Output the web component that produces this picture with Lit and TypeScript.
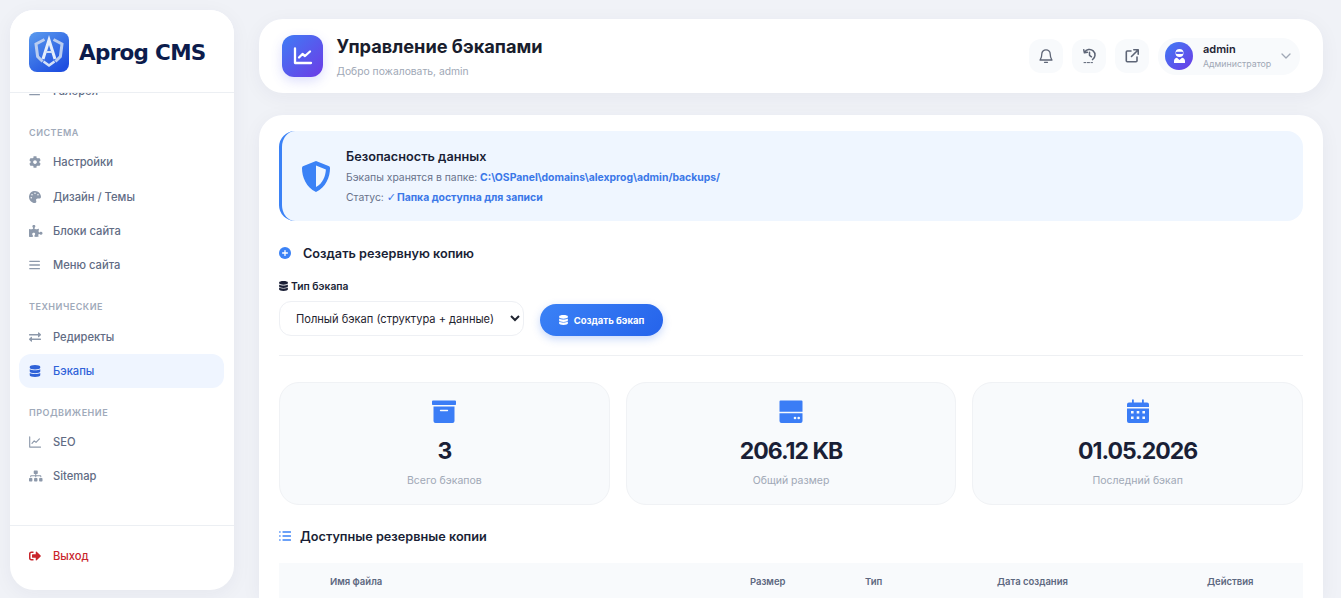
import { LitElement, html, css, svg } from "lit";
import { customElement } from "lit/decorators.js";

const DB = "M448 73.143v45.714C448 159.143 347.667 192 224 192S0 159.143 0 118.857V73.143C0 32.857 100.333 0 224 0s224 32.857 224 73.143zM448 176v102.857C448 319.143 347.667 352 224 352S0 319.143 0 278.857V176c48.125 33.143 136.208 48.572 224 48.572S399.874 209.143 448 176zm0 160v102.857C448 479.143 347.667 512 224 512S0 479.143 0 438.857V336c48.125 33.143 136.208 48.572 224 48.572S399.874 369.143 448 336z";
const dbIcon = html`<svg viewBox="0 0 448 512"><path fill="currentColor" d=${DB}></path></svg>`;

const icons: Record<string, unknown> = {
  cog: html`<svg viewBox="0 0 512 512"><path fill="currentColor" d="M487.4 315.7l-42.6-24.6c4.3-23.2 4.3-47 0-70.2l42.6-24.6c4.9-2.8 7.1-8.6 5.5-14-11.1-35.6-30-67.8-54.7-94.6-3.8-4.1-10-5.1-14.8-2.3L380.8 110c-17.9-15.4-38.5-27.3-60.8-35.1V25.8c0-5.6-3.9-10.5-9.4-11.7-36.7-8.2-74.3-7.8-109.2 0-5.5 1.2-9.4 6.1-9.4 11.7V75c-22.2 7.9-42.8 19.8-60.8 35.1L88.7 85.5c-4.9-2.8-11-1.9-14.8 2.3-24.7 26.7-43.6 58.9-54.7 94.6-1.7 5.4.6 11.2 5.5 14L67.3 221c-4.3 23.2-4.3 47 0 70.2l-42.6 24.6c-4.9 2.8-7.1 8.6-5.5 14 11.1 35.6 30 67.8 54.7 94.6 3.8 4.1 10 5.1 14.8 2.3l42.6-24.6c17.9 15.4 38.5 27.3 60.8 35.1v49.2c0 5.6 3.9 10.5 9.4 11.7 36.7 8.2 74.3 7.8 109.2 0 5.5-1.2 9.4-6.1 9.4-11.7v-49.2c22.2-7.9 42.8-19.8 60.8-35.1l42.6 24.6c4.9 2.8 11 1.9 14.8-2.3 24.7-26.7 43.6-58.9 54.7-94.6 1.5-5.5-.7-11.3-5.6-14.1zM256 336c-44.1 0-80-35.9-80-80s35.9-80 80-80 80 35.9 80 80-35.9 80-80 80z"></path></svg>`,
  palette: html`<svg viewBox="0 0 512 512"><path fill="currentColor" d="M204.3 5C104.9 24.4 24.8 104.3 5.2 203.4c-37 187 131.7 326.4 258.8 306.7 41.2-6.4 61.4-54.6 42.5-91.7-23.1-45.4 9.9-98.4 60.9-98.4h79.7c35.8 0 64.8-29.6 64.9-65.3C511.5 97.1 368.1-26.9 204.3 5zM96 320c-17.7 0-32-14.3-32-32s14.3-32 32-32 32 14.3 32 32-14.3 32-32 32zm32-128c-17.7 0-32-14.3-32-32s14.3-32 32-32 32 14.3 32 32-14.3 32-32 32zm128-64c-17.7 0-32-14.3-32-32s14.3-32 32-32 32 14.3 32 32-14.3 32-32 32zm128 64c-17.7 0-32-14.3-32-32s14.3-32 32-32 32 14.3 32 32-14.3 32-32 32z"></path></svg>`,
  puzzle: html`<svg viewBox="0 0 576 512"><path fill="currentColor" d="M519.442 288.651c-41.519 0-59.5 31.593-82.058 31.593C377.409 320.244 432 144 432 144s-196.288 80-196.288-3.297c0-35.827 36.288-46.25 36.288-85.985C272 19.216 243.885 0 210.539 0c-34.654 0-66.366 18.891-66.366 56.346 0 41.364 31.711 59.277 31.711 81.75C175.885 207.719 0 166.758 0 166.758v333.237s178.635 41.047 178.635-28.662c0-22.473-40-40.107-40-81.471 0-37.456 29.25-56.346 63.577-56.346 33.673 0 61.788 19.216 61.788 54.717 0 39.735-36.288 50.158-36.288 85.985 0 60.803 129.675 25.73 181.23 25.73 0 0-34.725-120.101 25.827-120.101 35.962 0 46.423 36.152 86.308 36.152C556.712 416 576 387.99 576 354.443c0-34.199-18.962-65.792-56.558-65.792z"></path></svg>`,
  bars: html`<svg viewBox="0 0 12 12"><path fill="none" stroke="currentColor" stroke-width="1.300" stroke-linecap="round" d="M.8 2.300h9.600M.8 6h9.600M.8 9.700h9.600"></path></svg>`,
  exchange: html`<svg viewBox="0 0 512 512"><path fill="currentColor" d="M0 168v-16c0-13.255 10.745-24 24-24h360V80c0-21.367 25.899-32.042 40.971-16.971l80 80c9.372 9.373 9.372 24.569 0 33.941l-80 80C409.956 271.982 384 261.456 384 240v-48H24c-13.255 0-24-10.745-24-24zm488 152H128v-48c0-21.314-25.862-32.080-40.971-16.971l-80 80c-9.372 9.373-9.372 24.569 0 33.941l80 80C102.057 463.997 128 453.437 128 432v-48h360c13.255 0 24-10.745 24-24v-16c0-13.255-10.745-24-24-24z"></path></svg>`,
  db: dbIcon,
  chart: html`<svg viewBox="0 0 12 12"><path fill="none" stroke="currentColor" stroke-width="1.150" stroke-linecap="round" stroke-linejoin="round" d="M.7 .9v10.200h10.800M3 7.300l2.200-2.400 1.800 1.500 3.400-3.500"></path></svg>`,
  sitemap: html`<svg viewBox="0 0 640 512"><path fill="currentColor" d="M128 352H32c-17.670 0-32 14.330-32 32v96c0 17.670 14.330 32 32 32h96c17.670 0 32-14.330 32-32v-96c0-17.670-14.330-32-32-32zm-24-80h192v48h48v-48h192v48h48v-57.590c0-21.170-17.230-38.410-38.410-38.410H344v-64h40c17.670 0 32-14.330 32-32V32c0-17.670-14.330-32-32-32H256c-17.670 0-32 14.330-32 32v96c0 17.670 14.330 32 32 32h40v64H94.410C73.230 224 56 241.230 56 262.410V320h48v-48zm264 80h-96c-17.670 0-32 14.330-32 32v96c0 17.670 14.330 32 32 32h96c17.670 0 32-14.330 32-32v-96c0-17.670-14.330-32-32-32zm240 0h-96c-17.670 0-32 14.330-32 32v96c0 17.670 14.330 32 32 32h96c17.670 0 32-14.330 32-32v-96c0-17.670-14.330-32-32-32z"></path></svg>`,
  logout: html`<svg viewBox="0 0 512 512"><path fill="currentColor" d="M497 273L329 441c-15 15-41 4.500-41-17v-96H152c-13.300 0-24-10.700-24-24v-96c0-13.300 10.700-24 24-24h136V88c0-21.400 25.900-32 41-17l168 168c9.300 9.400 9.300 24.600 0 34zM192 436v-40c0-6.600-5.400-12-12-12H96c-17.700 0-32-14.300-32-32V160c0-17.700 14.300-32 32-32h84c6.600 0 12-5.400 12-12V76c0-6.600-5.400-12-12-12H96c-53 0-96 43-96 96v192c0 53 43 96 96 96h84c6.600 0 12-5.400 12-12z"></path></svg>`,
};

const logoMark = svg`<svg viewBox="0 0 40 40">
  <defs><linearGradient id="lg" x1="0" y1="0" x2=".7" y2="1"><stop offset="0" stop-color="#5a9bee"></stop><stop offset="1" stop-color="#1f4fe0"></stop></linearGradient></defs>
  <rect width="40" height="40" rx="8" fill="url(#lg)"></rect>
  <path fill="none" stroke="#b9cdf0" stroke-width="3" stroke-linejoin="miter" d="M15.500 7.500L7 12l1.600 12.500 5 5M24.500 7.500L33 12l-1.600 12.500-5 5"></path>
  <path fill="none" stroke="#e6eefb" stroke-width="3" stroke-linejoin="miter" d="M14 27L20 8l6 19"></path>
  <path fill="none" stroke="#cfdef6" stroke-width="2" d="M16.500 20h7"></path>
  <path fill="none" stroke="#d5e2f8" stroke-width="2.600" d="M14.500 29.500L20 33.500l5.500-4"></path>
</svg>`;

type Item = { label: string; icon: string; active?: boolean };
const groups: { title: string; items: Item[] }[] = [
  { title: "Система", items: [
    { label: "Настройки", icon: "cog" },
    { label: "Дизайн / Темы", icon: "palette" },
    { label: "Блоки сайта", icon: "puzzle" },
    { label: "Меню сайта", icon: "bars" },
  ] },
  { title: "Технические", items: [
    { label: "Редиректы", icon: "exchange" },
    { label: "Бэкапы", icon: "db", active: true },
  ] },
  { title: "Продвижение", items: [
    { label: "SEO", icon: "chart" },
    { label: "Sitemap", icon: "sitemap" },
  ] },
];

@customElement("app-root")
export class AppRoot extends LitElement {
  static styles = css`
    :host { display: flex; height: 598px; overflow: hidden; background: #f0f2f7; font-family: Inter, "Noto Sans", sans-serif; color: #1a1f36; box-sizing: border-box; -webkit-font-smoothing: antialiased; }
    * { box-sizing: border-box; }
    svg { display: block; }
    .side { flex: none; width: 224px; height: 580px; margin: 10px 0 0 10px; background: #fff; border-radius: 24px; display: flex; flex-direction: column; overflow: hidden; box-shadow: 0 4px 20px rgba(30, 40, 80, .05); }
    .brand { flex: none; height: 83px; border-bottom: 1px solid #eceff3; padding: 2px 0 0 19px; display: flex; align-items: center; gap: 10px; background: #fff; }
    .mark { width: 40px; height: 40px; }
    .brand-name { font-family: "DejaVu Sans", sans-serif; font-weight: 700; font-size: 21.500px; color: #0c1c4c; white-space: nowrap; letter-spacing: -.7px; }
    .nav { flex: 1; overflow: hidden; padding: 0 10px 0 9px; }
    .clip { margin-top: -19px; }
    .item { height: 33.400px; margin-bottom: 1px; padding-left: 10px; display: flex; align-items: center; gap: 12px; border-radius: 12px; color: #616c84; font-size: 11.200px; font-weight: 500; }
    .item .ico { flex: none; width: 12px; height: 12px; color: #8d99ab; display: flex; align-items: center; justify-content: flex-start; }
    .ico svg { width: 100%; height: 100%; flex: none; }
    .ico.wide svg { width: 13.500px; height: 12px; }
    .item.active { background: #eff5ff; color: #2f62d8; }
    .item.active .ico { color: #2f62d8; }
    .group-title { margin: 19.300px 0 6.400px 10px; height: 12px; line-height: 12px; font-size: 9px; font-weight: 600; letter-spacing: .5px; text-transform: uppercase; color: #a0aaba; }
    .clip > .group-title:nth-child(2) { margin-top: 19.800px; }
    .foot { flex: none; height: 65px; border-top: 1px solid #eceff3; padding: 13px 10px 0 9px; }
    .foot .item, .foot .item .ico { color: #c9252c; }

    .main { flex: 1; min-width: 0; padding: 19px 18px 0 25px; display: flex; flex-direction: column; gap: 22px; }
    .head { flex: none; height: 74px; background: #fff; border-radius: 24px; padding: 0 23px 0 23px; display: flex; align-items: center; gap: 13.500px; box-shadow: 0 4px 20px rgba(30, 40, 80, .05); }
    .head-ico { flex: none; width: 41px; height: 42px; border-radius: 12px; background: linear-gradient(135deg, #3f7cf5, #6d3be6); display: flex; align-items: center; justify-content: center; color: #fff; box-shadow: 0 4px 12px rgba(80, 90, 240, .2); }
    .head-ico svg { width: 20px; height: 20px; }
    .head-text { flex: 1; min-width: 0; }
    .title { font-size: 18.200px; line-height: 24px; font-weight: 700; color: #191d2d; }
    .sub { margin-top: 7px; font-size: 10.300px; line-height: 13px; color: #a0a8b6; }
    .tools { display: flex; align-items: center; gap: 9.500px; }
    .tool { width: 33.500px; height: 34px; border-radius: 12px; background: #f8fafc; color: #5d6576; display: flex; align-items: center; justify-content: center; }
    .tool svg { width: 16px; height: 16px; }
    .user { width: 142px; height: 37px; border-radius: 18px; background: #f8fafc; padding: 0 7px; display: flex; align-items: center; }
    .avatar { flex: none; width: 28px; height: 28px; border-radius: 50%; background: linear-gradient(135deg, #3f7cf5, #6d3be6); color: #fff; display: flex; align-items: center; justify-content: center; }
    .avatar svg { width: 15px; height: 16px; }
    .u-text { flex: 1; margin-left: 10px; }
    .u-name { font-size: 11px; line-height: 13px; font-weight: 600; color: #1e2333; }
    .u-role { font-size: 8.800px; line-height: 12px; margin-top: 2px; color: #a0a8b6; }
    .chev { flex: none; width: 12px; height: 12px; color: #a0a8b6; margin-right: 1px; }

    .card { flex: 1; background: #fff; border-radius: 24px 24px 0 0; padding: 16px 20px 0; box-shadow: 0 4px 20px rgba(30, 40, 80, .05); min-height: 0; overflow: hidden; }
    .alert { height: 90px; background: #eff6ff; border-left: 3px solid #3b82f6; border-radius: 16px; padding: 0 0 0 20px; display: flex; align-items: center; gap: 16px; }
    .alert > svg { flex: none; width: 28px; height: 31px; }
    .alert-body { padding-top: 5px; }
    .alert-title { font-size: 12.700px; line-height: 16px; font-weight: 600; color: #1a1f36; margin-bottom: 3px; }
    .alert-line { font-size: 10.400px; line-height: 20px; color: #67718a; }
    .alert-line b { color: #3b78e8; font-weight: 700; }
    .check { font-family: "DejaVu Sans", sans-serif; font-weight: 700; font-size: 11px; letter-spacing: -1.500px; }
    .sec { display: flex; align-items: center; font-size: 12.700px; font-weight: 600; line-height: 18px; color: #1a1f36; }
    .sec svg { flex: none; width: 12px; height: 12px; color: #3b82f6; }
    .s1 { margin-top: 24px; gap: 12px; }
    .s1 svg { margin-top: -3px; }
    .s2 { margin-top: 23px; gap: 9px; }
    .s2 svg { margin-top: -3px; }
    .lbl { margin-top: 16px; display: flex; align-items: center; gap: 3px; font-size: 10.300px; line-height: 14px; font-weight: 600; color: #1a1f36; }
    .lbl svg { width: 9px; height: 10px; }
    .form { margin-top: 8px; display: flex; align-items: flex-end; gap: 16px; }
    select { width: 245px; height: 35px; border: 1px solid #eef0f4; border-radius: 12px; padding: 0 0 0 12px; background: #fff; font-family: inherit; font-size: 11.100px; color: #1f2430; }
    .btn { width: 123px; height: 32px; border: 0; border-radius: 16px; background: linear-gradient(135deg, #3b82f6, #2563eb); color: #fff; font-family: inherit; font-size: 9.500px; font-weight: 700; display: flex; align-items: center; justify-content: center; gap: 6px; box-shadow: 0 3px 8px rgba(37, 99, 235, .25); }
    .btn svg { width: 9px; height: 10px; }
    hr { margin: 19px 0 26px; border: 0; border-top: 1px solid #eef0f3; }
    .stats { display: grid; grid-template-columns: repeat(3, 1fr); gap: 16px; }
    .stat { height: 123px; background: #f8fafc; border: 1px solid #f0f2f5; border-radius: 20px; padding-top: 16px; display: flex; flex-direction: column; align-items: center; }
    .stat svg { height: 25px; width: 26px; color: #3b7df6; }
    .val { margin-top: 12px; font-size: 23px; line-height: 30px; font-weight: 700; color: #1a1f36; letter-spacing: -1px; }
    .cap { margin-top: 8px; font-size: 10.500px; line-height: 14px; color: #a0a8b6; }
    .thead { margin-top: 17px; height: 40px; background: #f8fafc; display: grid; grid-template-columns: 471px 115px 132px 210px 96px; align-items: center; font-size: 9.500px; line-height: 12px; font-weight: 600; color: #5d6880; padding-bottom: 3px; }
    .thead span:first-child { padding-left: 51px; }
  `;

  private item(i: Item) {
    const wide = i.icon === "sitemap" || i.icon === "puzzle";
    return html`<div class="item ${i.active ? "active" : ""}"><span class="ico ${wide ? "wide" : ""}">${icons[i.icon]}</span><span>${i.label}</span></div>`;
  }

  render() {
    return html`
      <aside class="side">
        <div class="brand"><div class="mark">${logoMark}</div><div class="brand-name">Aprog CMS</div></div>
        <nav class="nav"><div class="clip">
          ${this.item({ label: "Галерея", icon: "bars" })}
          ${groups.map((g) => html`<div class="group-title">${g.title}</div>${g.items.map((i) => this.item(i))}`)}
        </div></nav>
        <div class="foot">${this.item({ label: "Выход", icon: "logout" })}</div>
      </aside>
      <div class="main">
        <header class="head">
          <div class="head-ico"><svg viewBox="0 0 20 20"><path fill="none" stroke="currentColor" stroke-width="2.300" stroke-linecap="round" stroke-linejoin="round" d="M2 2.500V17h16M6 11.500l3.500-3.500 2.500 2 5-4.500"></path></svg></div>
          <div class="head-text"><div class="title">Управление бэкапами</div><div class="sub">Добро пожаловать, admin</div></div>
          <div class="tools">
            <div class="tool"><svg viewBox="0 0 16 16"><path fill="none" stroke="currentColor" stroke-width="1.300" stroke-linejoin="round" stroke-linecap="round" d="M8 1.800a4.200 4.200 0 0 0-4.200 4.200c0 4-1.500 5.500-1.800 6h12c-.3-.5-1.800-2-1.800-6A4.200 4.200 0 0 0 8 1.800zM6.500 14.300h3"></path></svg></div>
            <div class="tool"><svg viewBox="0 0 16 16"><path fill="none" stroke="currentColor" stroke-width="1.500" stroke-linecap="round" stroke-linejoin="round" d="M2.800 1.800l.6 3 3-.5M3.600 4.500A5.500 5.500 0 1 1 11.500 11.600M8.500 4.300v3l2 1.500"></path><path fill="none" stroke="currentColor" stroke-width="1" stroke-linecap="round" d="M3 14.600h1.800M6.300 14.600h2.200M10 14.600h1.500"></path></svg></div>
            <div class="tool"><svg viewBox="0 0 16 16"><path fill="none" stroke="currentColor" stroke-width="1.600" stroke-linecap="round" stroke-linejoin="round" d="M7 3H3.300a1 1 0 0 0-1 1v8.700a1 1 0 0 0 1 1H12a1 1 0 0 0 1-1V9M9.800 1.800h4.400v4.400M14 2L7.500 8.500"></path></svg></div>
            <div class="user">
              <div class="avatar"><svg viewBox="0 0 15 16"><path fill="currentColor" fill-rule="evenodd" d="M7.500 1a4 4 0 1 1 0 8 4 4 0 0 1 0-8zM5 3.800a1 1 0 0 0 0 2.200h5a1 1 0 0 0 0-2.200zM2 15v-2c0-2 1.400-3.200 3-3.300l2.500 2.300 2.500-2.300c1.600.1 3 1.300 3 3.300v2z"></path></svg></div>
              <div class="u-text"><div class="u-name">admin</div><div class="u-role">Администратор</div></div>
              <svg class="chev" viewBox="0 0 12 12"><path fill="none" stroke="currentColor" stroke-width="1.300" stroke-linecap="round" stroke-linejoin="round" d="M2 4l4 4 4-4"></path></svg>
            </div>
          </div>
        </header>
        <main class="card">
          <div class="alert">
            <svg viewBox="0 0 28 31"><path fill="#3b82f6" fill-rule="evenodd" d="M14 0l12.500 5c1 .4 1.500 1.200 1.500 2.200C28 16 24 26 14 31 4 26 0 16 0 7.200 0 6.200.5 5.400 1.500 5zM14 4.500v21.500c7-3.800 9.500-11 9.900-17.600z"></path></svg>
            <div class="alert-body">
              <div class="alert-title">Безопасность данных</div>
              <div class="alert-line">Бэкапы хранятся в папке: <b>C:\\OSPanel\\domains\\alexprog\\admin/backups/</b></div>
              <div class="alert-line">Статус: <b><span class="check">✓</span> Папка доступна для записи</b></div>
            </div>
          </div>
          <div class="sec s1"><svg viewBox="0 0 12 12"><circle cx="6" cy="6" r="6" fill="currentColor"></circle><path stroke="#fff" stroke-width="1.300" stroke-linecap="round" d="M6 3.600v4.800M3.600 6h4.800"></path></svg><span>Создать резервную копию</span></div>
          <div class="lbl">${dbIcon}<span>Тип бэкапа</span></div>
          <div class="form">
            <select><option>Полный бэкап (структура + данные)</option></select>
            <button class="btn">${dbIcon}<span>Создать бэкап</span></button>
          </div>
          <hr />
          <div class="stats">
            <div class="stat"><svg viewBox="0 0 26 25"><path fill="currentColor" d="M1 2.500A1 1 0 0 1 2 1.500h22a1 1 0 0 1 1 1v2.800a.7.7 0 0 1-.7.7H1.700A.7.7 0 0 1 1 5.300zM2.500 7.500h21V22a2 2 0 0 1-2 2h-17a2 2 0 0 1-2-2z"></path><path stroke="#f8fafc" stroke-width="1.300" stroke-linecap="round" d="M9.500 11.500h7"></path></svg><div class="val">3</div><div class="cap">Всего бэкапов</div></div>
            <div class="stat"><svg viewBox="0 0 26 25"><path fill="currentColor" d="M2.500 1.500h21a1 1 0 0 1 1 1v10.200h-23V2.500a1 1 0 0 1 1-1zM1.500 14.200h23V22a2 2 0 0 1-2 2h-19a2 2 0 0 1-2-2z"></path><circle cx="17" cy="19" r="1.300" fill="#f8fafc"></circle><circle cx="20.700" cy="19" r="1.300" fill="#f8fafc"></circle></svg><div class="val">206.12 KB</div><div class="cap">Общий размер</div></div>
            <div class="stat"><svg viewBox="0 0 26 25"><path fill="currentColor" fill-rule="evenodd" d="M7 .5h1.800v3H17V.5h1.800v3h3.200a2 2 0 0 1 2 2v2.500H2V5.500a2 2 0 0 1 2-2h3zM2 9.500h22V22a2 2 0 0 1-2 2H4a2 2 0 0 1-2-2zM6 12v2.500h2.600V12zM11.700 12v2.500h2.600V12zM17.400 12v2.500H20V12zM6 17.500V20h2.600v-2.500zM11.700 17.500V20h2.600v-2.500zM17.400 17.500V20H20v-2.500z"></path></svg><div class="val">01.05.2026</div><div class="cap">Последний бэкап</div></div>
          </div>
          <div class="sec s2"><svg viewBox="0 0 12 12"><path fill="none" stroke="currentColor" stroke-width="1.300" stroke-linecap="round" d="M4 2h7.500M4 6h7.500M4 10h7.500M.7 2h.4M.7 6h.4M.7 10h.4"></path></svg><span>Доступные резервные копии</span></div>
          <div class="thead"><span>Имя файла</span><span>Размер</span><span>Тип</span><span>Дата создания</span><span>Действия</span></div>
        </main>
      </div>
    `;
  }
}
